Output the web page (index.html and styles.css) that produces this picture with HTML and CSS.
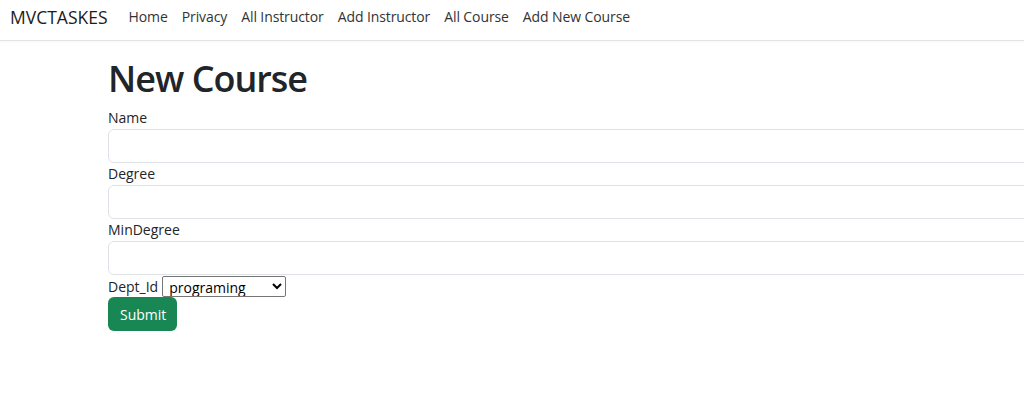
FILE: index.html
```html
<!DOCTYPE html>
<html lang="en">
<head>
    <meta charset="UTF-8">
    <meta name="viewport" content="width=device-width, initial-scale=1.0">
    <title>New Course - MVCTASKES</title>
    <link rel="stylesheet" href="styles.css">
</head>
<body>
    <header class="navbar">
        <a class="brand" href="#">MVCTASKES</a>
        <nav class="nav-links">
            <a class="nav-link" href="#">Home</a>
            <a class="nav-link" href="#">Privacy</a>
            <a class="nav-link" href="#">All Instructor</a>
            <a class="nav-link" href="#">Add Instructor</a>
            <a class="nav-link" href="#">All Course</a>
            <a class="nav-link" href="#">Add New Course</a>
        </nav>
    </header>

    <main class="content">
        <h1 class="title">New Course</h1>
        <form class="course-form">
            <label class="field-label" for="name">Name</label>
            <input class="form-control" type="text" id="name">

            <label class="field-label" for="degree">Degree</label>
            <input class="form-control" type="text" id="degree">

            <label class="field-label" for="minDegree">MinDegree</label>
            <input class="form-control" type="text" id="minDegree">

            <div class="dept-row">
                <label for="deptId">Dept_Id</label>
                <select id="deptId" class="dept-select">
                    <option>programing</option>
                </select>
            </div>

            <button class="btn-submit" type="submit">Submit</button>
        </form>
    </main>
</body>
</html>
```

FILE: styles.css
```css
html, body {
    margin: 0;
    overflow: hidden;
}
body {
    font-family: "Open Sans", "Noto Sans", sans-serif;
    font-size: 14px;
    color: #212529;
    background: #fff;
}
a {
    text-decoration: none;
    color: inherit;
}
.navbar {
    display: flex;
    align-items: center;
    height: 41px;
    padding: 0 10px 7px;
    box-sizing: border-box;
    border-bottom: 1px solid #e3e3e3;
    box-shadow: 0 1px 3px rgba(0,0,0,0.04);
}
.brand {
    font-size: 17.5px;
    margin-right: 14px;
    color: #1c1c1c;
}
.nav-links {
    display: flex;
}
.nav-link {
    padding: 0 7px;
    letter-spacing: -0.1px;
    color: #333;
}
.content {
    padding-left: 108px;
}
.title {
    font-size: 36px;
    font-weight: 600;
    letter-spacing: -1px;
    line-height: 48px;
    margin: 14px 0 4px;
}
.course-form {
    width: 960px;
}
.field-label {
    display: block;
    line-height: 22px;
}
.form-control {
    display: block;
    width: 100%;
    height: 34px;
    box-sizing: border-box;
    border: 1px solid #dee2e6;
    border-radius: 6px;
    padding: 6px 12px;
    font: inherit;
}
.dept-row {
    display: flex;
    align-items: center;
    gap: 4px;
    margin-top: 1px;
    line-height: 20px;
}
.dept-select {
    width: 124px;
    height: 21px;
    font-family: inherit;
    font-size: 14px;
    border: 1px solid #767676;
    border-radius: 2px;
    background: #fff;
    color: #000;
    padding: 0 2px;
}
.btn-submit {
    display: block;
    margin-top: 0;
    padding: 6px 12px;
    height: 34px;
    width: 69px;
    border: none;
    border-radius: 6px;
    background-color: #198754;
    color: #fff;
    font: inherit;
}
```
